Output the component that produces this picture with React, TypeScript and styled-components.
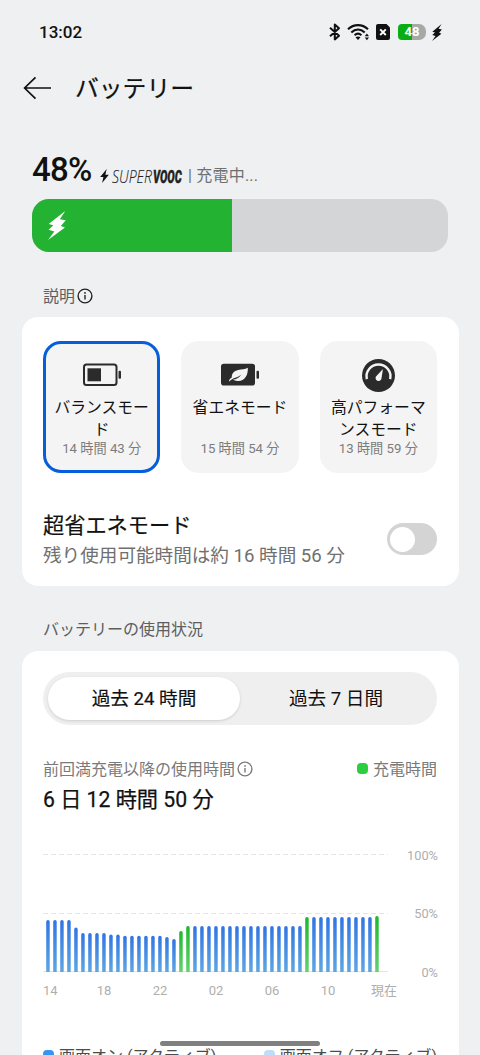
import React from 'react';
import styled, { createGlobalStyle } from 'styled-components';

const GlobalStyle = createGlobalStyle`
  * { box-sizing: border-box; }
  body {
    margin: 0;
    background: #eef0f2;
    font-family: Roboto, "Noto Sans CJK JP", sans-serif;
    color: #111;
  }
`;

const Screen = styled.main`
  position: relative;
  width: 480px;
  height: 1055px;
  overflow: hidden;
  background: #eef0f2;
`;

const StatusBar = styled.header`
  display: flex;
  align-items: center;
  justify-content: space-between;
  height: 64px;
  padding: 0 38px 0 39px;
`;

const Clock = styled.time`
  font-size: 17px;
  font-weight: 500;
  line-height: 20px;
`;

const StatusIcons = styled.div`
  display: flex;
  align-items: center;
`;

const WifiSlot = styled.span`
  display: flex;
  margin: 0 6px;
`;

const BatteryPill = styled.div`
  display: flex;
  align-items: center;
  justify-content: center;
  width: 28px;
  height: 16px;
  margin: 0 6px 0 8px;
  border-radius: 4px 7px 7px 4px;
  background: linear-gradient(90deg, #0aae14 0 50%, #a7a9a8 50%);
  color: #fff;
  font-size: 13px;
  font-weight: 700;
  line-height: 16px;
`;

const TitleBar = styled.div`
  display: flex;
  align-items: center;
  height: 48px;
  padding-left: 23px;
`;

const Title = styled.h1`
  margin: 1px 0 0 23px;
  font-size: 23.8px;
  font-weight: 400;
  line-height: 32px;
  -webkit-text-stroke: 0.2px currentColor;
`;

const ChargeRow = styled.div`
  display: flex;
  align-items: baseline;
  height: 40px;
  margin: 38px 32px 0;
  line-height: 40px;
`;

const Percent = styled.span`
  width: 60px;
  margin-right: 8px;
  font-size: 33px;
  font-weight: 500;
  letter-spacing: -0.7px;
`;

const Brand = styled.span`
  display: flex;
  align-items: baseline;
  width: 83px;
  color: #222;
`;

const BrandBolt = styled.svg`
  width: 9px;
  height: 14px;
  margin-right: 3px;
  transform: translateY(2px);
`;

const BrandWord = styled.span<{ $heavy?: boolean }>`
  display: inline-block;
  width: ${p => (p.$heavy ? 29 : 41)}px;
  font-family: ${p => (p.$heavy ? 'Roboto' : '"Open Sans"')}, sans-serif;
  font-size: 18px;
  font-style: italic;
  font-weight: ${p => (p.$heavy ? 900 : 300)};
  line-height: 20px;
  white-space: nowrap;
  transform: translateY(1.5px) scaleX(${p => (p.$heavy ? 0.61 : 0.78)});
  transform-origin: 0 50%;
  -webkit-text-stroke: ${p => (p.$heavy ? 0.4 : 0.1)}px currentColor;
`;

const ChargeState = styled.span`
  margin-left: 5px;
  color: #6e7072;
  font-size: 16px;
  letter-spacing: 0.2px;
  white-space: nowrap;
`;

const LevelTrack = styled.div`
  display: flex;
  height: 53px;
  margin: 9px 32px 0;
  overflow: hidden;
  border-radius: 17px;
  background: #d4d5d7;
`;

const LevelFill = styled.div`
  display: flex;
  align-items: center;
  width: 48%;
  padding-left: 16px;
  background: #24b233;
  color: #fff;
`;

const SectionLabel = styled.h2<{ $top: number; $bottom: number }>`
  display: flex;
  align-items: center;
  gap: 2px;
  height: 24px;
  margin: ${p => p.$top}px 43px ${p => p.$bottom}px;
  color: #5c5e60;
  font-size: 16px;
  font-weight: 400;
  line-height: 24px;
`;

const Ink = styled.span`
  display: flex;
  margin-top: -3px;
  color: #222;
`;

const Card = styled.section<{ $height: number; $top: number }>`
  height: ${p => p.$height}px;
  margin: 0 21.5px;
  padding: ${p => p.$top}px 21.5px 0;
  border-radius: 16px;
  background: #fff;
`;

const Modes = styled.div`
  display: grid;
  grid-template-columns: repeat(3, 1fr);
  gap: 21px;
`;

const ModeTile = styled.button<{ $selected?: boolean }>`
  display: flex;
  flex-direction: column;
  align-items: center;
  height: 132px;
  padding: 14px 7px 0;
  border: 3px solid ${p => (p.$selected ? '#075edb' : '#f4f4f4')};
  border-radius: 18px;
  background: #f4f4f4;
  color: #111;
  font: inherit;
`;

const ModeIcon = styled.span`
  display: flex;
  align-items: center;
  justify-content: center;
  height: 34px;
  margin-bottom: 5px;
`;

const ModeName = styled.span`
  width: 97px;
  height: 43px;
  font-size: 15.8px;
  line-height: 21.5px;
  text-align: center;
  word-break: break-all;
  line-break: anywhere;
`;

const ModeTime = styled.span`
  margin-top: -1px;
  color: #7c7c7c;
  font-size: 13.2px;
  line-height: 20px;
  white-space: nowrap;
`;

const SaverRow = styled.div`
  display: flex;
  align-items: center;
  justify-content: space-between;
  height: 60px;
  margin-top: 36px;
`;

const SaverText = styled.div`
  padding-top: 4px;
`;

const SaverTitle = styled.div`
  font-size: 21.2px;
  line-height: 30px;
  -webkit-text-stroke: 0.2px currentColor;
`;

const SaverNote = styled.div`
  color: #707070;
  font-size: 18.6px;
  line-height: 30px;
  white-space: nowrap;
`;

const Switch = styled.button`
  display: flex;
  align-items: center;
  width: 50px;
  height: 32px;
  padding: 0 3px;
  border: 0;
  border-radius: 16px;
  background: #d4d4d4;
`;

const Knob = styled.span`
  width: 25px;
  height: 25px;
  border-radius: 50%;
  background: #fff;
`;

const Segments = styled.div`
  display: grid;
  grid-template-columns: 1fr 1fr;
  height: 53px;
  padding: 5px;
  border-radius: 27px;
  background: #efefef;
`;

const Segment = styled.button<{ $active?: boolean }>`
  padding: 0;
  border: 0;
  border-radius: 22px;
  background: ${p => (p.$active ? '#fff' : 'transparent')};
  box-shadow: ${p => (p.$active ? '0 1px 3px rgba(0, 0, 0, 0.14)' : 'none')};
  color: #111;
  font-family: inherit;
  font-size: 18.6px;
  line-height: 42px;
  -webkit-text-stroke: ${p => (p.$active ? 0.2 : 0)}px currentColor;
`;

const UsageHead = styled.div`
  display: flex;
  align-items: center;
  justify-content: space-between;
  height: 24px;
  margin-top: 33px;
  color: #7a7a7a;
  font-size: 16px;
  line-height: 24px;
`;

const Inline = styled.span<{ $gap: number }>`
  display: flex;
  align-items: center;
  gap: ${p => p.$gap}px;
  white-space: nowrap;

  svg { margin-top: -3px; }
`;

const Dot = styled.span<{ $color: string }>`
  width: 11px;
  height: 11px;
  margin-top: -3px;
  border-radius: 4px;
  background: ${p => p.$color};
`;

const UsageTime = styled.div`
  margin-top: 3px;
  font-size: 21.2px;
  line-height: 30px;
  -webkit-text-stroke: 0.25px currentColor;
`;

const ChartRow = styled.div`
  display: flex;
  justify-content: space-between;
  height: 134px;
  margin-top: 30px;
`;

const Scale = styled.div`
  display: flex;
  flex-direction: column;
  justify-content: space-between;
  height: 133px;
  margin: 2.5px -1px 0 0;
  color: #aeaeae;
  font-size: 12.8px;
  line-height: 16px;
  text-align: right;
`;

const Hours = styled.div`
  display: grid;
  grid-template-columns: 33px repeat(6, 56px);
  width: 370px;
  margin-top: 3px;
  color: #aeaeae;
  font-size: 13px;
  line-height: 18px;
  text-align: center;
`;

const Hour = styled.span`
  &:first-child { text-align: left; }
`;

const Legend = styled.div`
  display: flex;
  justify-content: space-between;
  margin-top: 45px;
  color: #4c4c4c;
  font-size: 16px;
  line-height: 24px;
`;

const HomeIndicator = styled.div`
  position: absolute;
  left: 160px;
  bottom: 9px;
  width: 160px;
  height: 5px;
  border-radius: 3px;
  background: #808080;
`;

const InfoIcon = () => (
  <svg width="16" height="16" viewBox="0 0 16 16" fill="none" stroke="currentColor">
    <circle cx="8" cy="8" r="6.9" strokeWidth="1.4" />
    <path d="M8 7v4.5" strokeWidth="1.4" />
    <circle cx="8" cy="4.9" r="0.9" fill="currentColor" stroke="none" />
  </svg>
);

const Bolt = ({ width, height }: { width: number; height: number }) => (
  <svg width={width} height={height} viewBox="0 0 17 29" preserveAspectRatio="none" fill="currentColor">
    <path d="M16.300 0 .6 13.100l4.500 1.200L.5 18.800l5.500 1.700L0 29l16-12.500-3.900-1.600L16.800 9.200l-5.600-.9z" />
  </svg>
);

const BluetoothIcon = () => (
  <svg width="12" height="18" viewBox="0 0 12 18" fill="none" stroke="#111" strokeWidth="2" strokeLinejoin="round">
    <path d="M1 4.800l9 8-4.200 3.600V1.600L10 5.200l-9 8" />
  </svg>
);

const WifiIcon = () => (
  <svg width="23" height="18" viewBox="0 0 23 18" fill="none" stroke="#111" strokeWidth="2.1">
    <path d="M1 6.300C6.800.7 15.200.7 21 6.300M4.300 9.400c4-3.800 9.400-3.800 13.400 0M7.600 12.200c2-1.800 4.800-1.800 6.800 0" />
    <path d="M8.500 14.200 11 17l2.500-2.800c-1.400-1.100-3.600-1.100-5 0z" fill="#111" stroke="none" />
    <path d="M17.800 13.200l2.100-2.600 2.100 2.600zM17.800 14.600l2.100 2.600 2.100-2.600z" fill="#111" stroke="none" />
  </svg>
);

const SimIcon = () => (
  <svg width="14" height="16" viewBox="0 0 14 16">
    <path d="M2 0h8.500L14 3.500V14a2 2 0 0 1-2 2H2a2 2 0 0 1-2-2V2a2 2 0 0 1 2-2z" fill="#111" />
    <path d="M4.200 5.400l5.600 5.600M9.800 5.400l-5.600 5.600" stroke="#fff" strokeWidth="1.900" />
  </svg>
);

const BackIcon = () => (
  <svg width="29" height="24" viewBox="0 0 29 24" fill="none" stroke="#111" strokeWidth="1.7">
    <path d="M28 12H2M12.500 1.300 1.600 12l10.900 10.700" />
  </svg>
);

const BalanceIcon = () => (
  <svg width="38" height="24" viewBox="0 0 38 24">
    <rect x="1" y="1.500" width="32.500" height="20.500" rx="2.500" fill="none" stroke="#2b2b2b" strokeWidth="2" />
    <rect x="4.500" y="5.300" width="13.500" height="13" fill="#2b2b2b" />
    <rect x="35.500" y="7.800" width="2.500" height="8" rx="1" fill="#2b2b2b" />
  </svg>
);

const LeafIcon = () => (
  <svg width="38" height="24" viewBox="0 0 38 24">
    <rect x="0" y=".8" width="34" height="21.800" rx="2.800" fill="#2b2b2b" />
    <rect x="35.500" y="7.800" width="2.500" height="8" rx="1" fill="#2b2b2b" />
    <path d="M26.800 4.800c.4 7.500-3.200 13.600-10.200 13.200-2 0-3.600-.7-4.600-1.400 3.200-.2 6-1.800 8.400-5.100-3.800 3.100-6.300 3.100-8.500 4.200-1.700.8-2.700 1.800-3.300 2.700-.6-.4-.7-.9-.4-1.500.7-1 1.500-1.800 2.600-2.400-.3-3.900 2-6.800 6.400-7.600 3.500-.7 6.700-.3 9.600-2.100z" fill="#f4f4f4" />
  </svg>
);

const GaugeIcon = () => (
  <svg width="33" height="33" viewBox="0 0 32 32">
    <circle cx="16" cy="16" r="16" fill="#2b2b2b" />
    <path d="M4.700 19.500A11.600 11.600 0 1 1 27.300 19.500" fill="none" stroke="#f4f4f4" strokeWidth="2.300" />
    <path d="M20.300 9.700l-1.400 9.300c-.4 2.100-2.200 2.900-4 2.100-1.800-.9-2.300-2.700-1.100-4.400z" fill="#f4f4f4" />
  </svg>
);

const BARS: number[] = [
  ...Array(4).fill(52), 44.5, ...Array(4).fill(39), 37.5, 37.5, ...Array(6).fill(36.3), 35, 33,
  41, ...Array(17).fill(46), ...Array(10).fill(55), 56,
];
const CHARGING = new Set([19, 20, 37, 47]);

const UsageChart = () => (
  <svg width="346" height="134" viewBox="0 0 346 134">
    <defs>
      <linearGradient id="active" x1="0" y1="0" x2="0" y2="1">
        <stop offset="0" stopColor="#3174e4" />
        <stop offset="1" stopColor="#5da6e2" />
      </linearGradient>
      <linearGradient id="charging" x1="0" y1="0" x2="0" y2="1">
        <stop offset="0" stopColor="#1cb92c" />
        <stop offset="1" stopColor="#64d170" />
      </linearGradient>
    </defs>
    <path d="M0 9.500h345M0 68.500h345" stroke="#e4e4e4" strokeDasharray="5 3" />
    <path d="M0 126.500h345" stroke="#e4e4e4" />
    {BARS.map((h, i) => (
      <path
        key={i}
        d={`M${3.2 + i * 7} 127V${128.700 - h}a1.750 1.750 0 0 1 3.500 0V127z`}
        fill={CHARGING.has(i) ? 'url(#charging)' : 'url(#active)'}
      />
    ))}
  </svg>
);

export default function App() {
  return (
    <Screen>
      <GlobalStyle />
      <StatusBar>
        <Clock>13:02</Clock>
        <StatusIcons>
          <BluetoothIcon />
          <WifiSlot><WifiIcon /></WifiSlot>
          <SimIcon />
          <BatteryPill>48</BatteryPill>
          <Bolt width={10} height={17} />
        </StatusIcons>
      </StatusBar>

      <TitleBar>
        <BackIcon />
        <Title>バッテリー</Title>
      </TitleBar>

      <ChargeRow>
        <Percent>48%</Percent>
        <Brand>
          <BrandBolt viewBox="0 0 8 13">
            <path d="M6 0 0 7.500h3L1.800 13 8 5.300H4.800z" fill="#111" />
          </BrandBolt>
          <BrandWord>SUPER</BrandWord>
          <BrandWord $heavy>VOOC</BrandWord>
        </Brand>
        <ChargeState>| 充電中...</ChargeState>
      </ChargeRow>
      <LevelTrack>
        <LevelFill>
          <Bolt width={18} height={29} />
        </LevelFill>
      </LevelTrack>

      <SectionLabel $top={33} $bottom={8}>説明<Ink><InfoIcon /></Ink></SectionLabel>
      <Card $height={269} $top={24}>
        <Modes>
          <ModeTile $selected>
            <ModeIcon><BalanceIcon /></ModeIcon>
            <ModeName>バランスモード</ModeName>
            <ModeTime>14 時間 43 分</ModeTime>
          </ModeTile>
          <ModeTile>
            <ModeIcon><LeafIcon /></ModeIcon>
            <ModeName>省エネモード</ModeName>
            <ModeTime>15 時間 54 分</ModeTime>
          </ModeTile>
          <ModeTile>
            <ModeIcon><GaugeIcon /></ModeIcon>
            <ModeName>高パフォーマンスモード</ModeName>
            <ModeTime>13 時間 59 分</ModeTime>
          </ModeTile>
        </Modes>
        <SaverRow>
          <SaverText>
            <SaverTitle>超省エネモード</SaverTitle>
            <SaverNote>残り使用可能時間は約 16 時間 56 分</SaverNote>
          </SaverText>
          <Switch aria-label="超省エネモード"><Knob /></Switch>
        </SaverRow>
      </Card>

      <SectionLabel $top={32} $bottom={9}>バッテリーの使用状況</SectionLabel>
      <Card $height={440} $top={21}>
        <Segments>
          <Segment $active>過去 24 時間</Segment>
          <Segment>過去 7 日間</Segment>
        </Segments>
        <UsageHead>
          <Inline $gap={2}>前回満充電以降の使用時間<InfoIcon /></Inline>
          <Inline $gap={5}><Dot $color="#2ecc40" />充電時間</Inline>
        </UsageHead>
        <UsageTime>6 日 12 時間 50 分</UsageTime>
        <ChartRow>
          <UsageChart />
          <Scale><span>100%</span><span>50%</span><span>0%</span></Scale>
        </ChartRow>
        <Hours>
          {['14', '18', '22', '02', '06', '10', '現在'].map(h => <Hour key={h}>{h}</Hour>)}
        </Hours>
        <Legend>
          <Inline $gap={5}><Dot $color="#3595f5" />画面オン (アクティブ)</Inline>
          <Inline $gap={5}><Dot $color="#c0dcfb" />画面オフ (アクティブ)</Inline>
        </Legend>
      </Card>
      <HomeIndicator />
    </Screen>
  );
}
